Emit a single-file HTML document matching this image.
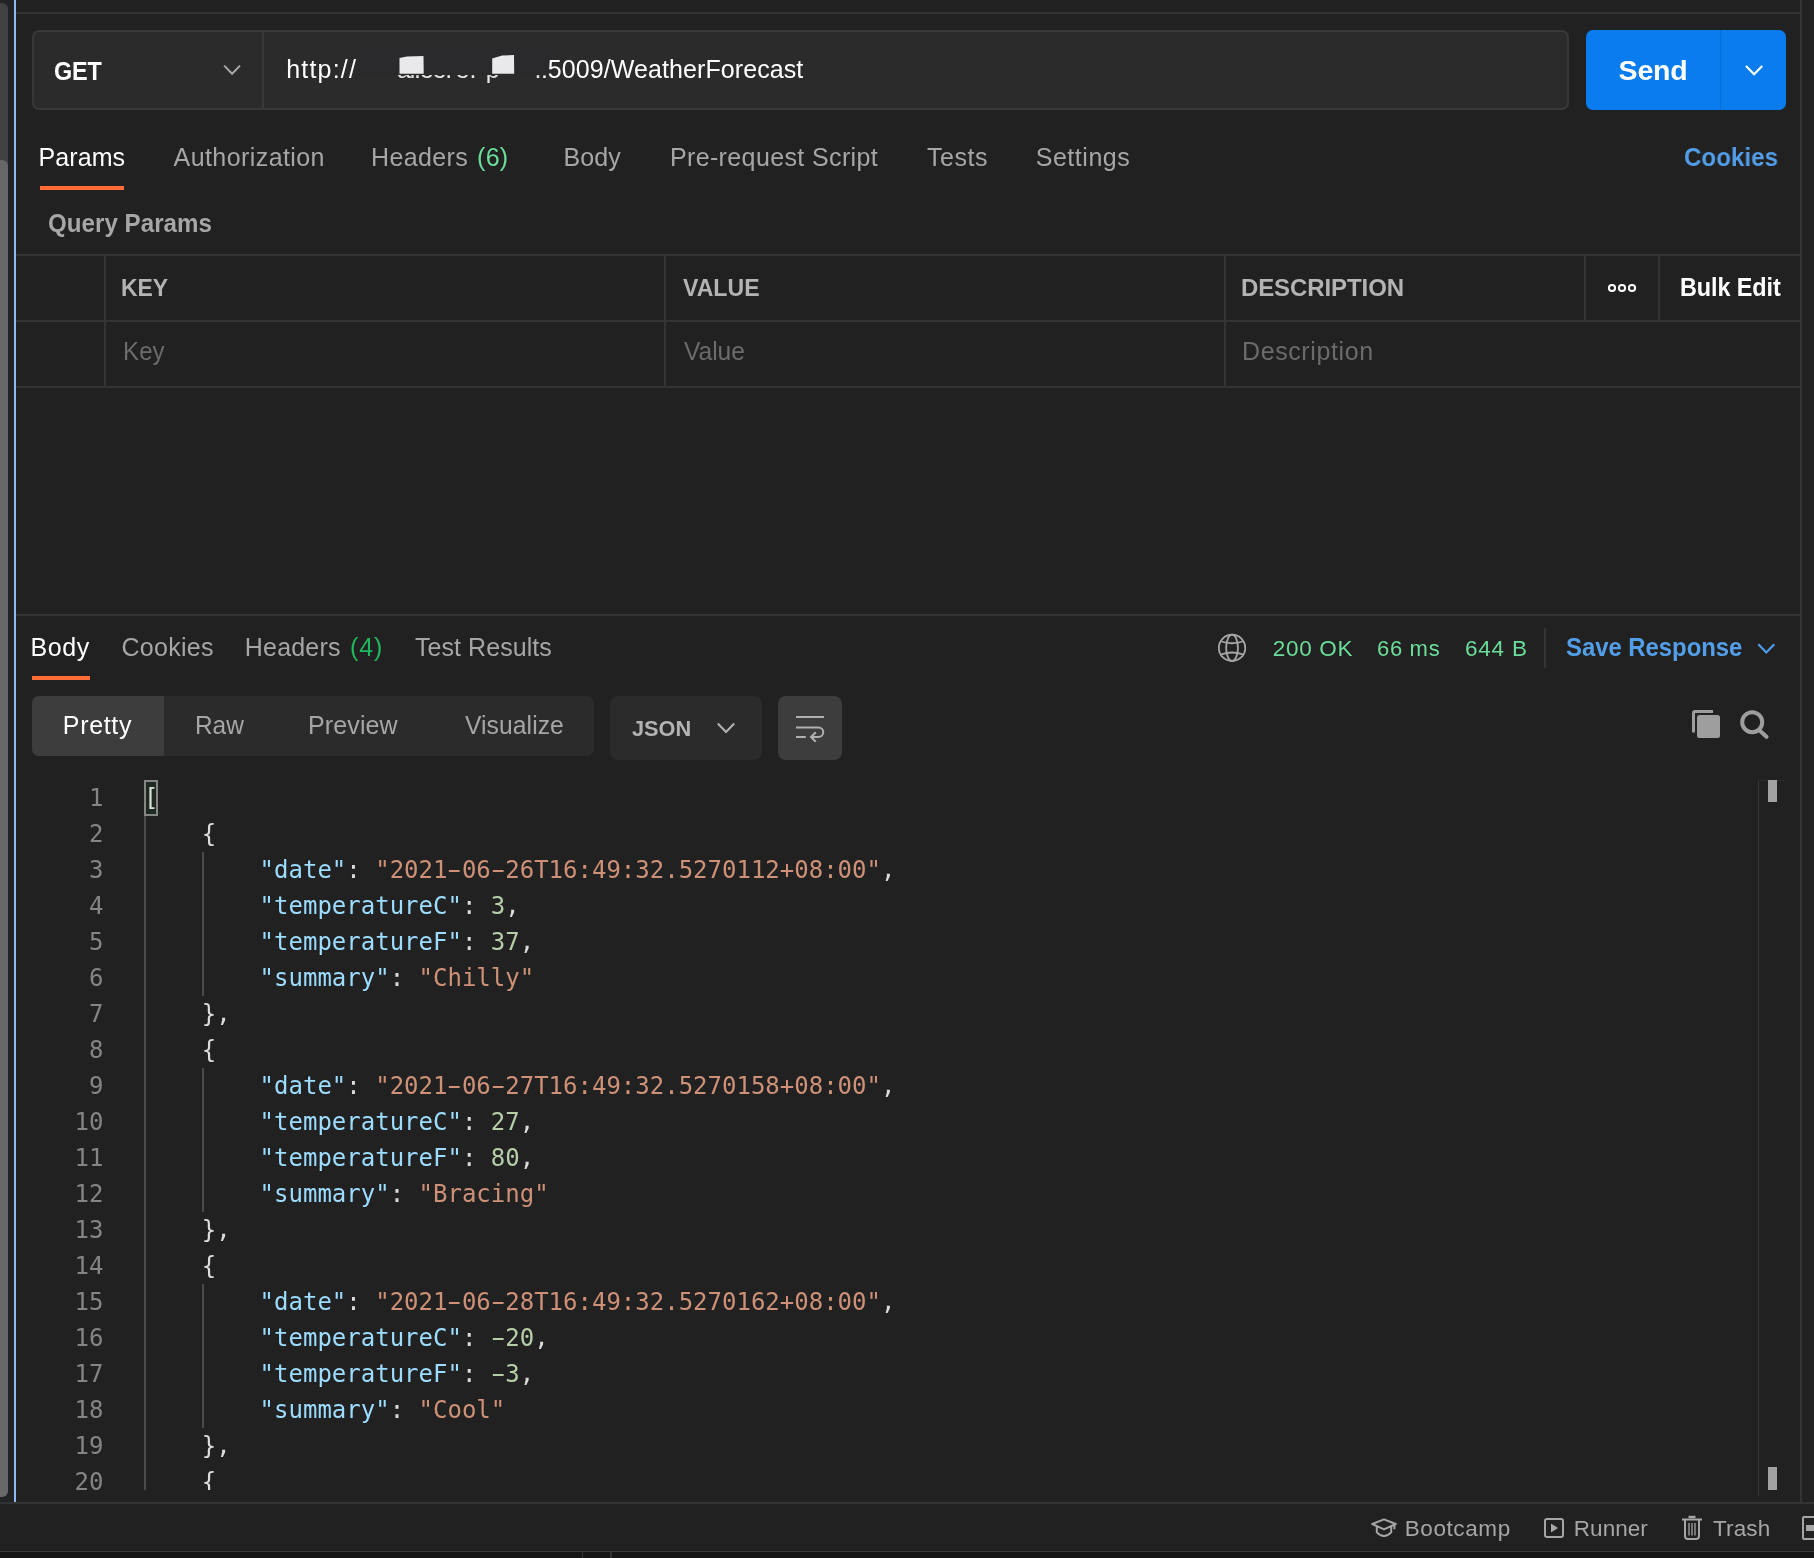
<!DOCTYPE html>
<html><head><meta charset="utf-8"><title>Postman</title>
<style>
html,body{margin:0;padding:0;background:#212121;}
body{width:1814px;height:1558px;position:relative;overflow:hidden;font-family:"Liberation Sans",sans-serif;}
.a{position:absolute;}
.t{position:absolute;white-space:nowrap;}
.ln{background:#333;position:absolute;}
.code{position:absolute;font-family:"DejaVu Sans Mono","Liberation Mono",monospace;font-size:24px;white-space:pre;}
.cl{height:36px;line-height:36px;}
.hy{display:inline-block;transform:scaleX(1.76);}
</style></head><body>
<div class="a" style="left:0;top:0;width:1814px;height:1558px;overflow:hidden;will-change:transform">
<!-- left strip -->
<div class="a" style="left:0;top:0;width:14px;height:1504px;background:#222425"></div>
<div class="a" style="left:0;top:3px;width:8px;height:1494px;background:#424242;border-radius:0 6px 6px 0"></div>
<div class="a" style="left:0;top:160px;width:8px;height:1337px;background:#686868;border-radius:0 6px 6px 0"></div>
<div class="a" style="left:14px;top:0;width:2px;height:1503px;background:#8bbcf8"></div>
<!-- frame lines -->
<div class="ln" style="left:16px;top:12px;width:1784px;height:2px"></div>
<div class="ln" style="left:1800px;top:0;width:2px;height:1503px"></div>
<div class="ln" style="left:0;top:1502px;width:1814px;height:2px"></div>
<div class="a" style="left:0;top:1551px;width:1814px;height:1px;background:#3a3a3a"></div>
<div class="a" style="left:0;top:1552px;width:1814px;height:6px;background:#161616"></div>
<div class="a" style="left:582px;top:1552px;width:1px;height:6px;background:#333"></div>
<div class="a" style="left:610px;top:1552px;width:2px;height:6px;background:#333"></div>

<!-- URL bar -->
<div class="a" style="left:32px;top:30px;width:1537px;height:80px;box-sizing:border-box;background:#2b2b2b;border:2px solid #383838;border-radius:7px"></div>
<div class="a" style="left:262px;top:32px;width:2px;height:76px;background:#383838"></div>
<svg class="a" style="left:220px;top:60px" width="24" height="20" viewBox="0 0 24 20"><path d="M4.2 5.6 L12.1 13.8 L20 5.6" fill="none" stroke="#a8a8a8" stroke-width="2"/></svg>
<!-- host (smudged) -->
<span class="a" id="host" style="left:397px;top:54.2px;font-size:25px;line-height:30px;color:#e6e6e6;white-space:pre;letter-spacing:-1.2px">al.ee.</span><span class="a" style="left:455.5px;top:54.2px;font-size:25px;line-height:30px;color:#e6e6e6;white-space:pre">e.</span><span class="a" style="left:485.8px;top:54.2px;font-size:25px;line-height:30px;color:#e6e6e6;white-space:pre">p</span><span class="a" style="left:534.5px;top:54.2px;font-size:25px;line-height:30px;color:#e6e6e6;white-space:pre">.</span>
<div class="a" style="left:358px;top:48px;width:192px;height:27.4px;background:#2a2a2c"></div>

<svg class="a" style="left:390px;top:50px" width="140" height="30" viewBox="0 0 140 30"><path d="M9.5 8 L17 6.5 L33.5 6 L33.7 23.7 L9.5 23.7 Z" fill="#e9e9eb"/><path d="M102.2 8.5 L112 5.5 L124 5 L124.2 23.7 L102.2 23.7 Z" fill="#e9e9eb"/></svg>

<!-- Send button -->
<div class="a" style="left:1586px;top:30px;width:200px;height:80px;background:#0a7cee;border-radius:7px"></div>
<div class="a" style="left:1720px;top:30px;width:1px;height:80px;background:#086fd8"></div>
<svg class="a" style="left:1742px;top:60px" width="24" height="20" viewBox="0 0 24 20"><path d="M4 6 L12.1 14.3 L20.2 6" fill="none" stroke="#fff" stroke-width="2.2"/></svg>

<!-- tab underline -->
<div class="a" style="left:40px;top:186px;width:84px;height:4px;background:#ff6c37"></div>

<!-- table -->
<div class="ln" style="left:16px;top:254px;width:1784px;height:2px"></div>
<div class="ln" style="left:16px;top:320px;width:1784px;height:2px"></div>
<div class="ln" style="left:16px;top:386px;width:1784px;height:2px"></div>
<div class="ln" style="left:104px;top:254px;width:2px;height:134px"></div>
<div class="ln" style="left:664px;top:254px;width:2px;height:134px"></div>
<div class="ln" style="left:1224px;top:254px;width:2px;height:134px"></div>
<div class="ln" style="left:1584px;top:254px;width:2px;height:67px"></div>
<div class="ln" style="left:1658px;top:254px;width:2px;height:67px"></div>
<svg class="a" style="left:1604px;top:280px" width="36" height="16" viewBox="0 0 36 16"><g fill="none" stroke="#fff" stroke-width="2"><circle cx="8" cy="8" r="3.1"/><circle cx="18" cy="8" r="3.1"/><circle cx="28" cy="8" r="3.1"/></g></svg>

<!-- response -->
<div class="ln" style="left:16px;top:614px;width:1784px;height:2px"></div>
<div class="a" style="left:32px;top:676px;width:58px;height:4px;background:#ff6c37"></div>
<svg class="a" style="left:1216px;top:632px" width="32" height="32" viewBox="0 0 32 32"><g fill="none" stroke="#a6a6a6" stroke-width="1.8"><circle cx="16.05" cy="15.9" r="13.2"/><ellipse cx="16.05" cy="15.9" rx="5.9" ry="13.2"/><path d="M5.3 9.5 Q16 13 26.8 9.5"/><path d="M5.3 22.3 Q16 18.7 26.8 22.3"/></g></svg>
<div class="a" style="left:1544px;top:628px;width:2px;height:40px;background:#333"></div>
<svg class="a" style="left:1754px;top:638px" width="24" height="20" viewBox="0 0 24 20"><path d="M4.3 6.3 L12.3 14.5 L20.3 6.3" fill="none" stroke="#4f9de8" stroke-width="2.2"/></svg>

<div class="a" style="left:32px;top:696px;width:562px;height:60px;background:#2b2b2b;border-radius:7px"></div>
<div class="a" style="left:32px;top:696px;width:132px;height:60px;background:#3d3d3d;border-radius:7px 0 0 7px"></div>
<div class="a" style="left:610px;top:696px;width:152px;height:64px;background:#2b2b2b;border-radius:8px"></div>
<svg class="a" style="left:714px;top:718px" width="24" height="20" viewBox="0 0 24 20"><path d="M3.8 5.6 L12 13.9 L20.2 5.6" fill="none" stroke="#b0b0b0" stroke-width="2.2"/></svg>
<div class="a" style="left:778px;top:696px;width:64px;height:64px;background:#3d3d3d;border-radius:8px"></div>
<svg class="a" style="left:790px;top:708px" width="40" height="40" viewBox="0 0 40 40"><g fill="none" stroke="#b0b0b0" stroke-width="2"><path d="M6 9 H34"/><path d="M6 19.5 H28.5 A4.75 4.75 0 0 1 28.5 29 H21.5"/><path d="M6 29 H15.8"/><path d="M25.8 24.2 L21 29 L25.8 33.8"/></g></svg>

<!-- copy + search -->
<svg class="a" style="left:1688px;top:706px" width="36" height="36" viewBox="0 0 36 36"><path d="M5.5 26.5 V7 Q5.5 5.5 7 5.5 H25" fill="none" stroke="#9e9e9e" stroke-width="3"/><rect x="9" y="9" width="23" height="23" rx="2.5" fill="#9e9e9e"/></svg>
<svg class="a" style="left:1736px;top:706px" width="36" height="36" viewBox="0 0 36 36"><circle cx="16.2" cy="16.2" r="10" fill="none" stroke="#9e9e9e" stroke-width="4"/><path d="M23.6 24.6 L30.5 30.8" stroke="#9e9e9e" stroke-width="4" stroke-linecap="round"/></svg>

<!-- editor -->
<div class="a" style="left:144px;top:816px;width:2px;height:674px;background:#4b4b4b"></div>
<div class="a" style="left:202px;top:852px;width:2px;height:144px;background:#4b4b4b"></div>
<div class="a" style="left:202px;top:1068px;width:2px;height:144px;background:#4b4b4b"></div>
<div class="a" style="left:202px;top:1284px;width:2px;height:144px;background:#4b4b4b"></div>
<div class="a" style="left:144px;top:780px;width:14px;height:36px;box-sizing:border-box;border:2px solid #868686;background:#1e2921"></div>
<div class="a" style="left:16px;top:780px;width:1740px;height:710px;overflow:hidden">
<div class="code" style="left:0;top:0px;width:87.5px;text-align:right;color:#858585"><div class="cl">1</div><div class="cl">2</div><div class="cl">3</div><div class="cl">4</div><div class="cl">5</div><div class="cl">6</div><div class="cl">7</div><div class="cl">8</div><div class="cl">9</div><div class="cl">10</div><div class="cl">11</div><div class="cl">12</div><div class="cl">13</div><div class="cl">14</div><div class="cl">15</div><div class="cl">16</div><div class="cl">17</div><div class="cl">18</div><div class="cl">19</div><div class="cl">20</div></div>
<div class="code" style="left:128px;top:0px;color:#dcdcdc"><div class="cl"><span style="color:#dcdcdc">[</span></div><div class="cl">    <span style="color:#dcdcdc">{</span></div><div class="cl">        <span style="color:#9cdcfe">"date"</span><span style="color:#dcdcdc">:</span> <span style="color:#ce9178">"2021<span class="hy">-</span>06<span class="hy">-</span>26T16:49:32.5270112+08:00"</span><span style="color:#dcdcdc">,</span></div><div class="cl">        <span style="color:#9cdcfe">"temperatureC"</span><span style="color:#dcdcdc">:</span> <span style="color:#b5cea8">3</span><span style="color:#dcdcdc">,</span></div><div class="cl">        <span style="color:#9cdcfe">"temperatureF"</span><span style="color:#dcdcdc">:</span> <span style="color:#b5cea8">37</span><span style="color:#dcdcdc">,</span></div><div class="cl">        <span style="color:#9cdcfe">"summary"</span><span style="color:#dcdcdc">:</span> <span style="color:#ce9178">"Chilly"</span></div><div class="cl">    <span style="color:#dcdcdc">},</span></div><div class="cl">    <span style="color:#dcdcdc">{</span></div><div class="cl">        <span style="color:#9cdcfe">"date"</span><span style="color:#dcdcdc">:</span> <span style="color:#ce9178">"2021<span class="hy">-</span>06<span class="hy">-</span>27T16:49:32.5270158+08:00"</span><span style="color:#dcdcdc">,</span></div><div class="cl">        <span style="color:#9cdcfe">"temperatureC"</span><span style="color:#dcdcdc">:</span> <span style="color:#b5cea8">27</span><span style="color:#dcdcdc">,</span></div><div class="cl">        <span style="color:#9cdcfe">"temperatureF"</span><span style="color:#dcdcdc">:</span> <span style="color:#b5cea8">80</span><span style="color:#dcdcdc">,</span></div><div class="cl">        <span style="color:#9cdcfe">"summary"</span><span style="color:#dcdcdc">:</span> <span style="color:#ce9178">"Bracing"</span></div><div class="cl">    <span style="color:#dcdcdc">},</span></div><div class="cl">    <span style="color:#dcdcdc">{</span></div><div class="cl">        <span style="color:#9cdcfe">"date"</span><span style="color:#dcdcdc">:</span> <span style="color:#ce9178">"2021<span class="hy">-</span>06<span class="hy">-</span>28T16:49:32.5270162+08:00"</span><span style="color:#dcdcdc">,</span></div><div class="cl">        <span style="color:#9cdcfe">"temperatureC"</span><span style="color:#dcdcdc">:</span> <span style="color:#b5cea8"><span class="hy">-</span>20</span><span style="color:#dcdcdc">,</span></div><div class="cl">        <span style="color:#9cdcfe">"temperatureF"</span><span style="color:#dcdcdc">:</span> <span style="color:#b5cea8"><span class="hy">-</span>3</span><span style="color:#dcdcdc">,</span></div><div class="cl">        <span style="color:#9cdcfe">"summary"</span><span style="color:#dcdcdc">:</span> <span style="color:#ce9178">"Cool"</span></div><div class="cl">    <span style="color:#dcdcdc">},</span></div><div class="cl">    <span style="color:#dcdcdc">{</span></div></div>
</div>
<!-- scrollbar/minimap -->
<div class="a" style="left:1758px;top:780px;width:1px;height:716px;background:#383838"></div>
<div class="a" style="left:1758px;top:780px;width:26px;height:1px;background:#2c2c2c"></div>
<div class="a" style="left:1768px;top:780px;width:9px;height:22px;background:#a2a2a2"></div>
<div class="a" style="left:1768px;top:1467px;width:9px;height:23px;background:#a2a2a2"></div>

<!-- status bar icons -->
<svg class="a" style="left:1368px;top:1514px" width="32" height="28" viewBox="0 0 32 28"><g fill="none" stroke="#a6a6a6" stroke-width="2" stroke-linejoin="round"><path d="M4.2 10 L16 5.4 L27.8 10 L16 15.3 Z"/><path d="M8.8 12.2 V18.4 Q16 25.8 23.2 18.4 V12.2"/><path d="M26.4 10.6 V15.2"/></g></svg>
<svg class="a" style="left:1540px;top:1514px" width="28" height="28" viewBox="0 0 28 28"><rect x="5" y="5" width="18" height="18" rx="2" fill="none" stroke="#a6a6a6" stroke-width="2"/><path d="M11 9.5 L18 14 L11 18.5 Z" fill="#a6a6a6"/></svg>
<svg class="a" style="left:1678px;top:1512px" width="28" height="32" viewBox="0 0 28 32"><g fill="none" stroke="#a6a6a6" stroke-width="2"><path d="M4 7.5 H24"/><path d="M10.5 5 H17.5" stroke-width="2.4"/><path d="M7 8 V24 Q7 27 10 27 H18 Q21 27 21 24 V8"/><path d="M11 11 V23.5 M14 11 V23.5 M17 11 V23.5" stroke-width="1.3"/></g></svg>
<div class="a" style="left:1802px;top:1516px;width:20px;height:24px;box-sizing:border-box;border:2px solid #a6a6a6;border-radius:2px"></div>
<div class="a" style="left:1806px;top:1525px;width:10px;height:6px;background:#a6a6a6"></div>

<!-- texts -->
<span class="t" id="t-get" style="left:54.10px;top:56.00px;font-size:25px;line-height:30px;font-weight:700;color:#ffffff;letter-spacing:-0.100px;transform:scaleX(0.9360);transform-origin:0 0">GET</span>
<span class="t" id="t-http" style="left:286.20px;top:54.00px;font-size:25px;line-height:30px;font-weight:400;color:#ffffff;letter-spacing:1.200px">http://</span>
<span class="t" id="t-colon" style="left:541.00px;top:54.00px;font-size:25px;line-height:30px;font-weight:400;color:#ffffff;letter-spacing:0.000px">:</span>
<span class="t" id="t-port" style="left:547.80px;top:54.00px;font-size:25px;line-height:30px;font-weight:400;color:#ffffff;letter-spacing:0.084px">5009/WeatherForecast</span>
<span class="t" id="t-send" style="left:1618.50px;top:53.00px;font-size:28.5px;line-height:34px;font-weight:700;color:#ffffff;letter-spacing:-0.133px">Send</span>
<span class="t" id="t-params" style="left:38.50px;top:142.00px;font-size:25px;line-height:30px;font-weight:400;color:#ffffff;letter-spacing:0.080px">Params</span>
<span class="t" id="t-auth" style="left:173.60px;top:142.00px;font-size:25px;line-height:30px;font-weight:400;color:#a6a6a6;letter-spacing:0.417px">Authorization</span>
<span class="t" id="t-hdrs" style="left:371.00px;top:142.00px;font-size:25px;line-height:30px;font-weight:400;color:#a6a6a6;letter-spacing:0.367px">Headers</span>
<span class="t" id="t-h6" style="left:477.00px;top:142.00px;font-size:25px;line-height:30px;font-weight:400;color:#6bdd9a;letter-spacing:0.300px">(6)</span>
<span class="t" id="t-body" style="left:563.40px;top:142.00px;font-size:25px;line-height:30px;font-weight:400;color:#a6a6a6;letter-spacing:0.133px">Body</span>
<span class="t" id="t-prs" style="left:669.90px;top:142.00px;font-size:25px;line-height:30px;font-weight:400;color:#a6a6a6;letter-spacing:0.376px">Pre-request Script</span>
<span class="t" id="t-tests" style="left:927.10px;top:142.00px;font-size:25px;line-height:30px;font-weight:400;color:#a6a6a6;letter-spacing:0.500px">Tests</span>
<span class="t" id="t-settings" style="left:1035.70px;top:142.00px;font-size:25px;line-height:30px;font-weight:400;color:#a6a6a6;letter-spacing:0.543px">Settings</span>
<span class="t" id="t-cookies" style="left:1683.80px;top:142.00px;font-size:25px;line-height:30px;font-weight:700;color:#539ee8;letter-spacing:0.067px;transform:scaleX(0.9625);transform-origin:0 0">Cookies</span>
<span class="t" id="t-qp" style="left:48.00px;top:208.00px;font-size:25px;line-height:30px;font-weight:700;color:#a6a6a6;letter-spacing:0.018px;transform:scaleX(0.9655);transform-origin:0 0">Query Params</span>
<span class="t" id="t-key" style="left:121.40px;top:273.00px;font-size:24px;line-height:29px;font-weight:700;color:#b3b3b3;letter-spacing:-0.050px;transform:scaleX(0.9562);transform-origin:0 0">KEY</span>
<span class="t" id="t-value" style="left:683.00px;top:273.00px;font-size:24px;line-height:29px;font-weight:700;color:#b3b3b3;letter-spacing:0.000px;transform:scaleX(0.9620);transform-origin:0 0">VALUE</span>
<span class="t" id="t-desc" style="left:1240.90px;top:273.00px;font-size:24px;line-height:29px;font-weight:700;color:#b3b3b3;letter-spacing:-0.080px">DESCRIPTION</span>
<span class="t" id="t-bulk" style="left:1680.20px;top:272.00px;font-size:25px;line-height:30px;font-weight:700;color:#ffffff;letter-spacing:-0.100px;transform:scaleX(0.9364);transform-origin:0 0">Bulk Edit</span>
<span class="t" id="t-keyp" style="left:123.00px;top:336.00px;font-size:25px;line-height:30px;font-weight:400;color:#6b6b6b;letter-spacing:0.150px;transform:scaleX(0.9585);transform-origin:0 0">Key</span>
<span class="t" id="t-valuep" style="left:684.40px;top:336.00px;font-size:25px;line-height:30px;font-weight:400;color:#6b6b6b;letter-spacing:-0.025px;transform:scaleX(0.9820);transform-origin:0 0">Value</span>
<span class="t" id="t-descp" style="left:1242.00px;top:336.00px;font-size:25px;line-height:30px;font-weight:400;color:#6b6b6b;letter-spacing:0.600px">Description</span>
<span class="t" id="t-rbody" style="left:30.50px;top:632.00px;font-size:25px;line-height:30px;font-weight:400;color:#ffffff;letter-spacing:0.600px">Body</span>
<span class="t" id="t-rcookies" style="left:121.50px;top:632.00px;font-size:25px;line-height:30px;font-weight:400;color:#a6a6a6;letter-spacing:0.267px">Cookies</span>
<span class="t" id="t-rhdrs" style="left:244.80px;top:632.00px;font-size:25px;line-height:30px;font-weight:400;color:#a6a6a6;letter-spacing:0.200px">Headers</span>
<span class="t" id="t-h4" style="left:350.00px;top:632.00px;font-size:25px;line-height:30px;font-weight:400;color:#1fb85c;letter-spacing:0.900px">(4)</span>
<span class="t" id="t-tr" style="left:414.90px;top:632.00px;font-size:25px;line-height:30px;font-weight:400;color:#a6a6a6;letter-spacing:0.073px">Test Results</span>
<span class="t" id="t-ok" style="left:1272.80px;top:635.00px;font-size:22.5px;line-height:27px;font-weight:400;color:#6bdd9a;letter-spacing:0.680px">200 OK</span>
<span class="t" id="t-ms" style="left:1377.40px;top:635.00px;font-size:22.5px;line-height:27px;font-weight:400;color:#6bdd9a;letter-spacing:0.675px;transform:scaleX(0.9794);transform-origin:0 0">66 ms</span>
<span class="t" id="t-sz" style="left:1465.10px;top:635.00px;font-size:22.5px;line-height:27px;font-weight:400;color:#6bdd9a;letter-spacing:0.750px">644 B</span>
<span class="t" id="t-save" style="left:1566.00px;top:632.00px;font-size:25px;line-height:30px;font-weight:700;color:#539ee8;letter-spacing:-0.058px;transform:scaleX(0.9579);transform-origin:0 0">Save Response</span>
<span class="t" id="t-pretty" style="left:62.80px;top:710.00px;font-size:25px;line-height:30px;font-weight:400;color:#ffffff;letter-spacing:0.680px">Pretty</span>
<span class="t" id="t-raw" style="left:194.90px;top:710.00px;font-size:25px;line-height:30px;font-weight:400;color:#a6a6a6;letter-spacing:-0.050px;transform:scaleX(0.9771);transform-origin:0 0">Raw</span>
<span class="t" id="t-preview" style="left:308.10px;top:710.00px;font-size:25px;line-height:30px;font-weight:400;color:#a6a6a6;letter-spacing:0.100px">Preview</span>
<span class="t" id="t-viz" style="left:464.60px;top:710.00px;font-size:25px;line-height:30px;font-weight:400;color:#a6a6a6;letter-spacing:0.075px;transform:scaleX(0.9859);transform-origin:0 0">Visualize</span>
<span class="t" id="t-json" style="left:632.10px;top:715.00px;font-size:22.5px;line-height:27px;font-weight:700;color:#b3b3b3;letter-spacing:0.000px;transform:scaleX(0.9667);transform-origin:0 0">JSON</span>
<span class="t" id="t-boot" style="left:1404.70px;top:1515.00px;font-size:22.5px;line-height:27px;font-weight:400;color:#a6a6a6;letter-spacing:0.600px">Bootcamp</span>
<span class="t" id="t-runner" style="left:1573.80px;top:1515.00px;font-size:22.5px;line-height:27px;font-weight:400;color:#a6a6a6;letter-spacing:0.040px">Runner</span>
<span class="t" id="t-trash" style="left:1713.00px;top:1515.00px;font-size:22.5px;line-height:27px;font-weight:400;color:#a6a6a6;letter-spacing:0.150px">Trash</span>
<div class="a" style="left:538px;top:54px;width:9px;height:19px;background:#2a2a2c"></div>
</div>
</body></html>
